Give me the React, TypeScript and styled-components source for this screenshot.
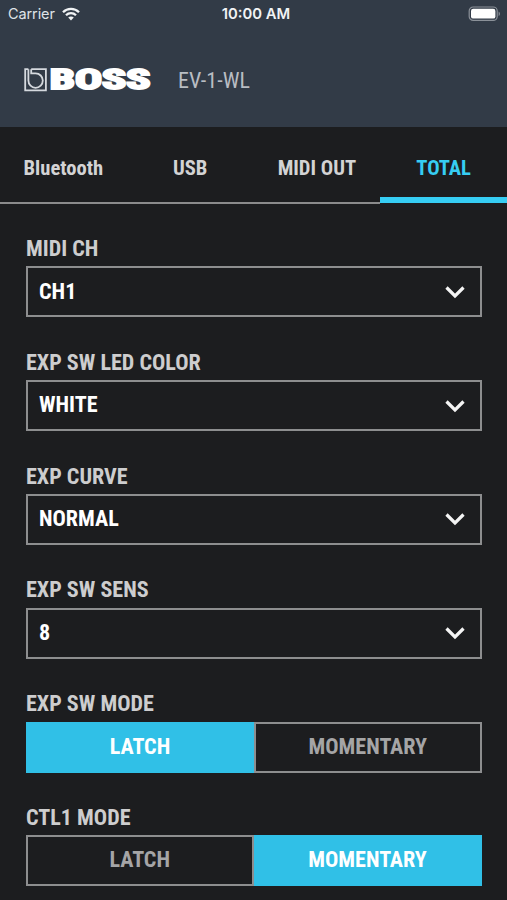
import React from 'react';
import styled, { createGlobalStyle } from 'styled-components';

const GlobalStyle = createGlobalStyle`
  * { box-sizing: border-box; }
  body { margin: 0; background: #1c1d1f; }
`;

const Screen = styled.div`
  width: 507px;
  height: 900px;
  overflow: hidden;
  background: #1c1d1f;
  font-family: 'Roboto Condensed', Roboto, sans-serif;
  font-stretch: 75%;
  color: #cdcdce;
`;

const Header = styled.header`
  height: 127px;
  background: #323b47;
`;

const StatusBar = styled.div`
  height: 27px;
  display: grid;
  grid-template-columns: 1fr auto 1fr;
  align-items: center;
  padding: 0 6px 0 8px;
  font-family: Inter, sans-serif;
  font-stretch: normal;
  font-size: 14.5px;
  color: #dfe3e8;
`;

const Carrier = styled.div`
  display: flex;
  align-items: center;
  gap: 7px;
  letter-spacing: -0.1px;
`;

const Clock = styled.div`
  padding-left: 3px;
  font-size: 14.8px;
  font-weight: 600;
  color: #f1f3f5;
`;

const BatterySlot = styled.div`
  display: flex;
  justify-content: flex-end;
`;

const Brand = styled.div`
  display: flex;
  align-items: center;
  height: 106px;
  padding-left: 24px;
  gap: 26px;
`;

const Model = styled.span`
  font-size: 22px;
  color: #b9bdc3;
`;

const Tabs = styled.nav`
  display: grid;
  grid-template-columns: repeat(4, 1fr);
  height: 77px;
`;

const Tab = styled.button<{ $active?: boolean }>`
  border: 0;
  background: none;
  font: inherit;
  font-size: 20.6px;
  font-weight: 700;
  line-height: 24px;
  padding: 29px 0 0;
  display: flex;
  justify-content: center;
  white-space: nowrap;
  color: ${p => (p.$active ? '#36cdf3' : '#d3d3d4')};
  box-shadow: ${p => (p.$active ? 'inset 0 -6px #36cdf3' : 'inset 0 -2px #8b8b8c')};
  height: ${p => (p.$active ? '76px' : '77px')};
`;

const Form = styled.main`
  padding: 32px 25.5px 0 26px;
`;

const Field = styled.section`
  height: 113.8px;
`;

const Label = styled.div`
  height: 30.4px;
  line-height: 24px;
  font-size: 22.1px;
  font-weight: 700;
  white-space: nowrap;
`;

const Select = styled.div`
  display: flex;
  align-items: center;
  justify-content: space-between;
  height: 51px;
  padding: 0 15px 0 11px;
  border: 2px solid #8d8e8f;
  font-size: 22.1px;
  font-weight: 700;
  color: #fff;
`;

const Value = styled.span`
  line-height: 26px;
  padding-bottom: 2.6px;
`;

const Segments = styled.div<{ $split: number }>`
  display: grid;
  grid-template-columns: ${p => p.$split}px 1fr;
  height: 51px;
`;

const Segment = styled.button<{ $on: boolean }>`
  margin: 0;
  padding: 0 0 3px;
  font: inherit;
  font-size: 22.1px;
  font-weight: 700;
  color: ${p => (p.$on ? '#fff' : '#a5a5a6')};
  background: ${p => (p.$on ? '#30c0e7' : 'transparent')};
  border: ${p => (p.$on ? '0' : '2px solid #8d8e8f')};
`;

const Wordmark = styled.text`
  font-family: 'Roboto Condensed', Roboto, sans-serif;
  font-stretch: 75%;
  font-weight: 700;
  font-size: 27px;
  fill: #fff;
  stroke: #fff;
  stroke-width: 2px;
  stroke-linejoin: miter;
`;

const Wifi = () => (
  <svg width="18" height="14" viewBox="0 0 18 14" fill="none" stroke="#f1f3f5" strokeWidth="2.3">
    <path d="M1 5.2C5.4.8 12.6.8 17 5.2" />
    <path d="M4 8.3c2.8-2.8 7.2-2.8 10 0" />
    <path d="M9 13.4 6.2 10.6c1.6-1.5 4-1.5 5.6 0z" fill="#f1f3f5" stroke="none" />
  </svg>
);

const Battery = () => (
  <svg width="33" height="16" viewBox="0 0 33 16">
    <rect x="1.2" y="1" width="28" height="13.4" rx="4" fill="none" stroke="#8b9199" strokeWidth="1.2" />
    <rect x="3" y="2.8" width="24.4" height="9.8" rx="2.2" fill="#fff" />
    <path d="M30.6 5.4c1.8.8 1.8 3.8 0 4.6z" fill="#8b9199" />
  </svg>
);

const Logo = () => (
  <svg width="128" height="24" viewBox="0 0 128 24" overflow="visible">
    <g fill="none" stroke="#d5d9de">
      <path d="M7.2 1.2H21.9V22.3H1.2V1.2H4.4" strokeWidth="1.8" />
      <path d="M4.4 1.2V12.6a7.2 7.2 0 1 0 7.2-7.2H7.2V1.2" strokeWidth="1.8" />
    </g>
    <Wordmark
      transform="translate(25.8 21.4) scale(1.9 1)"
      textLength="53"
      lengthAdjust="spacingAndGlyphs"
    >BOSS</Wordmark>
  </svg>
);

const Chevron = () => (
  <svg width="20" height="14" viewBox="0 0 20 14" fill="none" stroke="#f4f4f4" strokeWidth="3.2">
    <path d="M1.5 2.5 10 11l8.5-8.5" />
  </svg>
);

const selects = [
  ['MIDI CH', 'CH1'],
  ['EXP SW LED COLOR', 'WHITE'],
  ['EXP CURVE', 'NORMAL'],
  ['EXP SW SENS', '8'],
];

const modes = [
  { label: 'EXP SW MODE', value: 'LATCH', split: 228 },
  { label: 'CTL1 MODE', value: 'MOMENTARY', split: 227.5 },
];

export default function App() {
  return (
    <>
      <GlobalStyle />
      <Screen>
        <Header>
          <StatusBar>
            <Carrier>Carrier <Wifi /></Carrier>
            <Clock>10:00 AM</Clock>
            <BatterySlot><Battery /></BatterySlot>
          </StatusBar>
          <Brand>
            <Logo />
            <Model>EV-1-WL</Model>
          </Brand>
        </Header>
        <Tabs>
          <Tab>Bluetooth</Tab>
          <Tab>USB</Tab>
          <Tab>MIDI OUT</Tab>
          <Tab $active>TOTAL</Tab>
        </Tabs>
        <Form>
          {selects.map(([label, value]) => (
            <Field key={label}>
              <Label>{label}</Label>
              <Select><Value>{value}</Value><Chevron /></Select>
            </Field>
          ))}
          {modes.map(m => (
            <Field key={m.label}>
              <Label>{m.label}</Label>
              <Segments $split={m.split}>
                <Segment $on={m.value === 'LATCH'}>LATCH</Segment>
                <Segment $on={m.value === 'MOMENTARY'}>MOMENTARY</Segment>
              </Segments>
            </Field>
          ))}
        </Form>
      </Screen>
    </>
  );
}
